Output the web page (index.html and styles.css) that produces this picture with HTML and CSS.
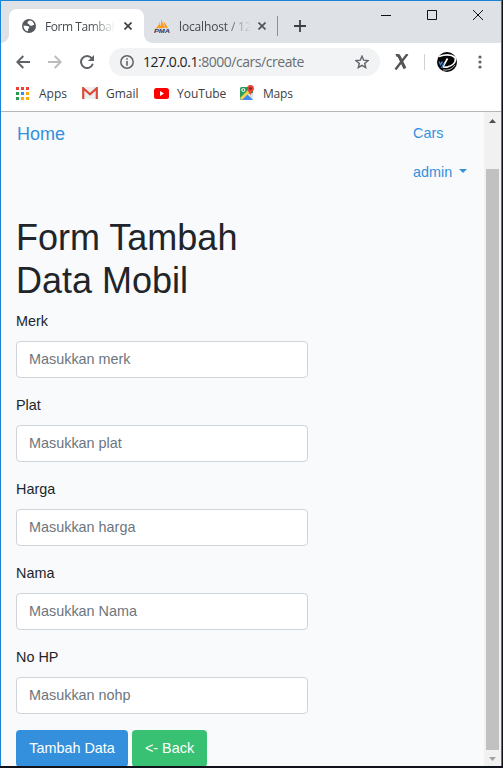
FILE: index.html
```html
<!DOCTYPE html>
<html lang="id">
<head>
<meta charset="utf-8">
<title>Form Tambah Data Mobil</title>
<link rel="stylesheet" href="styles.css">
</head>
<body>
<div class="window">
  <div class="tabs">
    <div class="corner"></div>
    <div class="tab active">
      <svg class="globe" width="14" height="14" viewBox="0 0 14 14"><circle cx="7" cy="7" r="7" fill="#55595d"/><path d="M7 1.700C5.400 2.600 5 4 6 4.800 7.800 5.200 7 6.800 9.500 6.800c1 0 1.600-1.200 2.700-.6C12 3.900 10.400 1.800 8.400 1.600zM1.600 6.400c1.500.2 3.600.2 4.800.9 1.500.9.8 2 0 2.300-.6.3-.2 1.900-.4 2.600C3.200 11.800 1.400 9.300 1.600 6.400z" fill="#fff"/></svg>
      <span class="tab-title">Form Tambah</span>
      <svg class="close" width="8" height="8" viewBox="0 0 8 8"><path d="M.5.5l7 7M7.500.5l-7 7" stroke="#3c4043" stroke-width="1.700"/></svg>
    </div>
    <div class="tab other">
      <svg class="pma" width="16" height="16" viewBox="0 0 16 16"><path d="M1 10.500Q5 8 5.800 3.500L6 10zM5 10.300Q8 6 7 1l4 9zM9.500 3.500q3 2.500 4.500 6.800l-3-.6z" fill="#f89b23"/><text x="0" y="15" textLength="16" lengthAdjust="spacingAndGlyphs">PMA</text></svg>
      <span class="tab-title">localhost / 12</span>
      <svg class="close" width="8" height="8" viewBox="0 0 8 8"><path d="M.5.5l7 7M7.500.5l-7 7" stroke="#4c5053" stroke-width="1.600"/></svg>
    </div>
    <div class="tab-sep"></div>
    <svg class="plus" width="12" height="12" viewBox="0 0 12 12"><path d="M6 0v12M0 6h12" stroke="#3c4043" stroke-width="1.800"/></svg>
    <svg class="controls" width="104" height="12" viewBox="0 0 104 12"><path d="M1 6.500h10M47.500 1.500h9v9h-9zM93 1l10 10M103 1L93 11" fill="none" stroke="#111" stroke-width="1"/></svg>
  </div>
  <div class="toolbar">
    <svg class="arrow" width="14" height="14" viewBox="0 0 14 14"><path d="M14 7H1.500M7.300 1L1.300 7l6 6" fill="none" stroke="#5f6368" stroke-width="1.900"/></svg>
    <svg class="arrow forward" width="14" height="14" viewBox="0 0 14 14"><path d="M0 7h12.500M6.700 1l6 6-6 6" fill="none" stroke="#babcbe" stroke-width="1.900"/></svg>
    <svg class="reload" width="14" height="14" viewBox="0 0 14 14"><path d="M11.700 3.200A6 6 0 1 0 12.800 8.800" fill="none" stroke="#5f6368" stroke-width="2"/><path d="M14 0v6H8z" fill="#5f6368"/></svg>
    <div class="address">
      <svg width="14" height="14" viewBox="0 0 14 14"><circle cx="7" cy="7" r="6.200" fill="none" stroke="#5f6368" stroke-width="1.500"/><path d="M7 3.300v1.500M7 6v4.700" stroke="#5f6368" stroke-width="1.600"/></svg>
      <span class="url"><b>127.0.0.1</b>:8000/cars/create</span>
      <svg class="star" width="14" height="14" viewBox="0 0 14 14"><path d="M7 1.200l1.700 4 4.300.4-3.300 2.800 1 4.200L7 10.400l-3.700 2.200 1-4.200L1 5.600l4.300-.4z" fill="none" stroke="#5f6368" stroke-width="1.400"/></svg>
    </div>
    <svg class="ext" width="15" height="16" viewBox="0 0 15 16"><path d="M2 1.500q2.200-1 3.200 1L11 14.500" fill="none" stroke="#555" stroke-width="3"/><path d="M13.500 0L8 7 1.500 15.500" fill="none" stroke="#555" stroke-width="2.400"/></svg>
    <div class="tool-sep"></div>
    <svg class="avatar" width="20" height="20" viewBox="0 0 20 20"><circle cx="10" cy="10" r="10" fill="#050505"/><path d="M2 4.500Q13 1 18 5.500q2 6.500-7 9.300-4.500 1-5-.3L10.500 6.500" fill="none" stroke="#fff" stroke-width="1.700"/><path d="M2 9.500l1.500 3 2-3M4.500 16l2.500-5" fill="none" stroke="#4381cc" stroke-width="1.400"/><path d="M6 18q8 1 12-5" fill="none" stroke="#ddd" stroke-width=".8"/></svg>
    <svg class="dots" width="4" height="14" viewBox="0 0 4 14"><g fill="#5f6368"><circle cx="2" cy="2" r="1.600"/><circle cx="2" cy="7" r="1.600"/><circle cx="2" cy="12" r="1.600"/></g></svg>
  </div>
  <div class="bookmarks">
    <svg class="bm-icon" width="13" height="13" viewBox="0 0 13 13"><path d="M0 0h3v3H0zM5 0h3v3H5zM10 0h3v3h-3z" fill="#ea4335"/><path d="M0 5h3v3H0zM0 10h3v3H0z" fill="#249b52"/><path d="M5 5h3v3H5z" fill="#4285f4"/><path d="M10 5h3v3h-3zM5 10h3v3H5zM10 10h3v3h-3z" fill="#fbab05"/></svg><span class="bm apps">Apps</span>
    <svg class="bm-icon" width="16" height="12" viewBox="0 0 16 12"><path d="M1 0h14v12H1z" fill="#eee"/><path d="M1.200 12V1.200L8 7.200l6.800-6V12" fill="none" stroke="#d94a3d" stroke-width="2.200"/></svg><span class="bm gmail">Gmail</span>
    <svg class="bm-icon" width="15" height="11" viewBox="0 0 15 11"><rect width="15" height="11" rx="2.500" fill="#f00"/><path d="M6 3l4 2.500L6 8z" fill="#fff"/></svg><span class="bm youtube">YouTube</span>
    <svg class="bm-icon map" width="16" height="16" viewBox="0 0 16 16"><rect x="1" y="2" width="13" height="13" rx="1.500" fill="#2d9b58"/><path d="M2 15l6-6 6 6z" fill="#4285f4"/><path d="M1 13L12 2l2 2L3 15z" fill="#f8d14a"/><path d="M8 9l6 6V8z" fill="#dce3e9"/><circle cx="4.300" cy="5" r="1.500" fill="none" stroke="#fff"/><path d="M11.500 0C8.800 0 8 2 8 3.500c0 2.500 2.600 3 3.500 7 .9-4 3.500-4.500 3.500-7C15 2 14 0 11.500 0z" fill="#e64536"/><circle cx="11.500" cy="3.500" r="1.300" fill="#7d1c16"/></svg><span class="bm maps">Maps</span>
  </div>
  <div class="viewport">
    <main class="page">
      <nav class="nav"><a class="brand">Home</a><div class="links"><a>Cars</a><a class="dropdown">admin</a></div></nav>
      <form class="form">
        <h1>Form Tambah Data Mobil</h1>
        <div class="group"><label for="merk">Merk</label><input id="merk" placeholder="Masukkan merk"></div>
        <div class="group"><label for="plat">Plat</label><input id="plat" placeholder="Masukkan plat"></div>
        <div class="group"><label for="harga">Harga</label><input id="harga" placeholder="Masukkan harga"></div>
        <div class="group"><label for="nama">Nama</label><input id="nama" placeholder="Masukkan Nama"></div>
        <div class="group"><label for="nohp">No HP</label><input id="nohp" placeholder="Masukkan nohp"></div>
        <div class="buttons"><button class="save" type="button">Tambah Data</button><button class="back" type="button">&lt;- Back</button></div>
      </form>
    </main>
    <div class="scrollbar">
      <svg width="17" height="17" viewBox="0 0 17 17"><path d="M5 11l3.500-4 3.500 4z" fill="#505050"/></svg>
      <div class="track"><div class="thumb"></div></div>
      <svg width="17" height="17" viewBox="0 0 17 17"><path d="M5 7l3.500 4L12 7z" fill="#a3a3a3"/></svg>
    </div>
  </div>
</div>
</body>
</html>
```
FILE: styles.css
```css
* { box-sizing: border-box; }
body { margin: 0; width: 503px; height: 768px; overflow: hidden; background: #10131b; font-family: "Liberation Sans", Arial, sans-serif; }
svg { display: block; flex: none; }
.window { width: 502px; height: 766px; border: 1px solid #1883d7; border-bottom: 0; background: #fff; display: flex; flex-direction: column; }
.tabs { height: 42px; flex: none; background: #dee1e6; display: flex; align-items: flex-end; }
.corner { width: 8px; height: 8px; background: radial-gradient(circle at 0 0, #dee1e6 7.5px, #fff 8px); }
.tab { height: 34px; display: flex; align-items: center; font: 12px "Open Sans", sans-serif; color: #45494d; }
.tab.active { width: 135px; background: #fff; border-radius: 8px 8px 0 0; padding-left: 13px; }
.tab.other { width: 133px; padding-left: 10px; background: radial-gradient(circle at 100% 0, #dee1e6 7.5px, #fff 8px) 0 100% / 8px 8px no-repeat; }
.tab-title { width: 70px; margin-left: 9px; white-space: nowrap; letter-spacing: -.45px; -webkit-mask-image: linear-gradient(90deg, #000 65%, transparent); mask-image: linear-gradient(90deg, #000 65%, transparent); }
.close { margin-left: 9px; }
.other .tab-title { width: 72px; margin-left: 9px; letter-spacing: -.15px; }
.other .close { margin-left: 7px; }
.pma { width: 16px; }
.pma text { font: italic bold 6px "Liberation Sans", sans-serif; fill: #30335f; }
.tab-sep { width: 1px; height: 20px; background: #8b8e92; margin-bottom: 7px; }
.plus { margin: 0 0 11px 16px; }
.controls { margin: 0 0 22px 74px; }
.toolbar { height: 37px; flex: none; display: flex; align-items: center; padding-left: 15px; }
.forward { margin-left: 18px; }
.reload { margin-left: 18px; }
.address { margin-left: 15px; width: 271px; height: 28px; border-radius: 14px; background: #f1f3f4; display: flex; align-items: center; padding: 0 11px; }
.url { margin-left: 9px; font: 14px "Open Sans", sans-serif; color: #6a6e72; letter-spacing: -.46px; white-space: nowrap; }
.url b { font-weight: 400; color: #202124; }
.star { margin-left: auto; }
.ext { margin-left: 14px; }
.tool-sep { width: 1px; height: 16px; margin-left: 15px; background: #cfd2d5; }
.avatar { margin-left: 12px; }
.dots { margin-left: 21px; }
.bookmarks { height: 32px; flex: none; border-bottom: 1px solid #b2b5b9; display: flex; align-items: center; padding: 0 0 5px 15px; font: 12px "Open Sans", sans-serif; color: #3c4043; }
.bm { white-space: nowrap; }
.apps { width: 43px; margin-left: 10px; }
.gmail { width: 48px; margin-left: 8px; }
.youtube { width: 62px; margin-left: 8px; }
.maps { margin-left: 8px; letter-spacing: -.2px; }
.viewport { flex: 1; display: flex; min-height: 0; background: #f8fafc; }
.page { width: 483px; padding-left: 15px; overflow: hidden; }
.nav { height: 104px; display: flex; justify-content: space-between; color: #3490dc; }
.brand { font-size: 18px; line-height: 29px; padding: 8px 0 0 1px; }
.links { width: 71px; padding-top: 2px; font-size: 14.4px; display: flex; flex-direction: column; }
.links a { line-height: 39px; }
.dropdown { display: flex; align-items: center; }
.dropdown::after { content: ""; margin: -3px 0 0 7px; border: 4.5px solid transparent; border-top-color: #3490dc; border-bottom: 0; }
.form { width: 292px; margin: 0; font-size: 14.4px; color: #212529; }
h1 { margin: 0 0 7px; font-size: 36px; font-weight: 400; line-height: 43px; }
.group { height: 84px; display: flex; flex-direction: column; }
label { line-height: 23px; height: 23px; margin: 0 0 8px; }
h1 + .group { height: 85px; padding-top: 1px; }
input { width: 292px; height: 37px; border: 1px solid #ced4da; border-radius: 4px; padding: 0 12px 2px; background: #fff; font: 14.4px "Liberation Sans", Arial, sans-serif; }
input::placeholder { color: #6c757d; opacity: 1; }
.buttons { display: flex; gap: 4px; }
button { height: 37px; border: 0; border-radius: 4px; padding: 0 0 2px; color: #fff; font: 14.4px "Liberation Sans", Arial, sans-serif; }
.save { width: 112px; background: #3490dc; }
.back { width: 75px; background: #38c172; }
.scrollbar { width: 17px; flex: none; display: flex; flex-direction: column; background: #f1f1f1; }
.track { flex: 1; padding: 40px 2px 0; }
.thumb { height: 581px; background: #c1c1c1; }
```
